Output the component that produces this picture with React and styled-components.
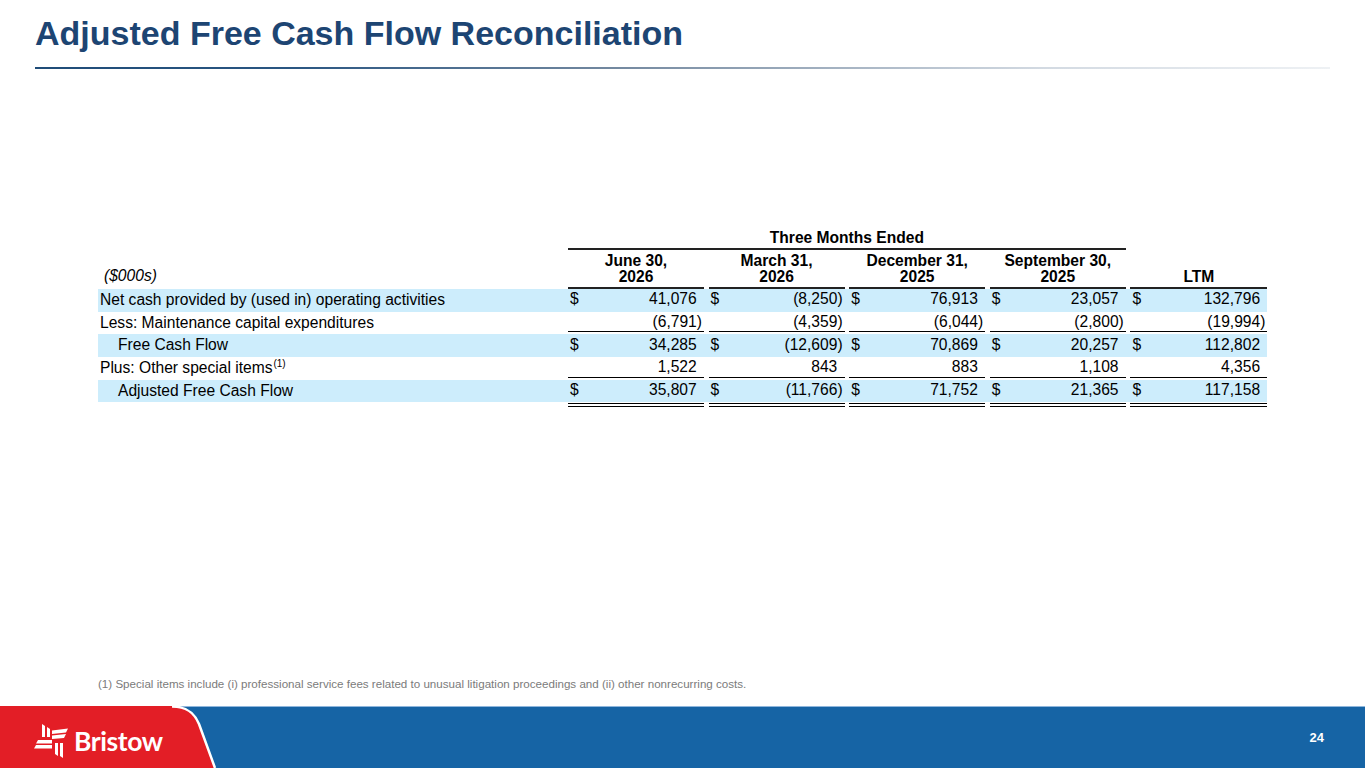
import React from 'react'
import styled, { createGlobalStyle } from 'styled-components'

const GlobalStyle = createGlobalStyle`
  html, body {
    margin: 0;
    padding: 0;
    background: #ffffff;
  }
  body {
    font-family: 'Liberation Sans', Arial, sans-serif;
  }
`

const Page = styled.div`
  width: 1365px;
  height: 768px;
  display: flex;
  flex-direction: column;
  overflow: hidden;
  background: #ffffff;
`

const Header = styled.header`
  padding: 14px 35px 0 35px;
`

const Title = styled.h1`
  margin: 0;
  font: 700 34px/39px 'Liberation Sans', Arial, sans-serif;
  color: #1d4573;
`

const TitleRule = styled.div`
  margin-top: 14px;
  height: 2px;
  background: linear-gradient(
    to right,
    #1f4c78 0%,
    #2a5682 20%,
    #7489a0 45%,
    #d3dae2 78%,
    #eef1f4 100%
  );
`

const Body = styled.main`
  flex: 1;
  display: flex;
  flex-direction: column;
  padding: 160px 0 0 98px;
`

const Table = styled.div`
  width: 1169.4px;
  font-family: 'Liberation Sans', Arial, sans-serif;
  font-size: 15.6px;
  color: #000;
`

const Row = styled.div`
  display: grid;
  grid-template-columns: 470px repeat(4, 140.6px) 137px;
  height: ${props => props.height || '22.6px'};
  background: ${props => (props.shaded ? '#cdedfc' : 'transparent')};
`

const GroupTitle = styled.div`
  grid-column: 2 / 6;
  margin-right: 4.6px;
  text-align: center;
  font-weight: 700;
  line-height: 18px;
  padding-bottom: 1px;
  border-bottom: 2px solid #222;
`

const HeadRow = styled.div`
  display: grid;
  grid-template-columns: 470px repeat(4, 140.6px) 137px;
  align-items: end;
`

const UnitsLabel = styled.div`
  font-style: italic;
  padding: 0 0 6px 6px;
  line-height: 15.6px;
`

const ColHead = styled.div`
  margin-right: ${props => (props.last ? '0' : '4.6px')};
  padding: 3px 0 3px;
  text-align: center;
  font-weight: 700;
  line-height: 15.6px;
  border-bottom: 2px solid #222;
`

const Label = styled.div`
  padding-left: ${props => (props.indent ? '20px' : '2px')};
  line-height: 22px;
  white-space: nowrap;
`

const Sup = styled.sup`
  font-size: 10px;
  line-height: 0;
  vertical-align: 6px;
  margin-left: 1px;
`

const Figure = styled.div`
  display: flex;
  align-items: center;
  justify-content: space-between;
  margin-right: ${props => (props.last ? '0' : '4.6px')};
  margin-bottom: 2px;
  padding: 1px 2px 0 2px;
  border-bottom: 1px solid ${props => (props.rule ? '#000' : 'transparent')};
  white-space: nowrap;
`

const Amount = styled.span`
  padding-right: ${props => (props.neg ? '0' : '0.34em')};
`

const DoubleRuleRow = styled.div`
  display: grid;
  grid-template-columns: 470px repeat(4, 140.6px) 137px;
`

const DoubleRule = styled.div`
  grid-column: ${props => props.col};
  margin: 1px ${props => (props.last ? '0' : '4.6px')} 0 0;
  height: 2px;
  border-top: 1px solid #000;
  border-bottom: 1px solid #000;
`

const Footnote = styled.p`
  margin: auto 0 14px 0;
  font: 400 11.6px/16px 'Liberation Sans', Arial, sans-serif;
  color: #7b7b7b;
`

const Footer = styled.footer`
  height: 61px;
  display: flex;
  align-items: center;
  background: #1664a5;
  border-top: 1px solid #8fb6dc;
`

const Tab = styled.div`
  position: relative;
  width: 230px;
  height: 100%;
  display: flex;
  align-items: center;
  padding-left: 32px;
  box-sizing: border-box;
`

const TabShape = styled.svg`
  position: absolute;
  left: 0;
  top: -1px;
  width: 230px;
  height: 62px;
`

const Logo = styled.div`
  position: relative;
  display: flex;
  align-items: center;
  gap: 2px;
  margin-top: 2px;
`

const Wordmark = styled.span`
  font: 700 26.5px/1 Lato, 'Open Sans', sans-serif;
  color: #fff;
  letter-spacing: -0.4px;
  margin-top: 6px;
`

const Spacer = styled.div`
  flex: 1;
`

const PageNumber = styled.span`
  padding-right: 41px;
  font: 700 13px/1 'Liberation Sans', Arial, sans-serif;
  color: #fff;
  margin-top: -1px;
`

const columns = [
  ['June 30,', '2026'],
  ['March 31,', '2026'],
  ['December 31,', '2025'],
  ['September 30,', '2025']
]

const rows = [
  {
    label: 'Net cash provided by (used in) operating activities',
    shaded: true,
    dollar: true,
    values: ['41,076', '(8,250)', '76,913', '23,057', '132,796']
  },
  {
    label: 'Less: Maintenance capital expenditures',
    rule: true,
    values: ['(6,791)', '(4,359)', '(6,044)', '(2,800)', '(19,994)']
  },
  {
    label: 'Free Cash Flow',
    indent: true,
    shaded: true,
    dollar: true,
    values: ['34,285', '(12,609)', '70,869', '20,257', '112,802']
  },
  {
    label: 'Plus: Other special items',
    note: '(1)',
    rule: true,
    values: ['1,522', '843', '883', '1,108', '4,356']
  },
  {
    label: 'Adjusted Free Cash Flow',
    indent: true,
    shaded: true,
    dollar: true,
    values: ['35,807', '(11,766)', '71,752', '21,365', '117,158']
  }
]

const Mark = () => (
  <svg width='40' height='42' viewBox='0 0 40 42' fill='#fff'>
    <polygon points='10,6 13,8 13,19 10,19' />
    <polygon points='15,9 18,11 18,19 15,19' />
    <polygon points='20,12.5 36,10.5 34,14.5 20,16' />
    <polygon points='20,17.5 34,16 32,20 20,21' />
    <polygon points='6,22 20,22 20,25.5 4,25.5' />
    <polygon points='4,27 20,27 20,30.5 2,30.5' />
    <polygon points='23,25 26,25 26,38 23,36' />
    <polygon points='28,25 31,25 31,40 28,38' />
  </svg>
)

export default function App () {
  return (
    <Page>
      <GlobalStyle />
      <Header>
        <Title>Adjusted Free Cash Flow Reconciliation</Title>
        <TitleRule />
      </Header>
      <Body>
        <Table>
          <Row height='auto'>
            <GroupTitle>Three Months Ended</GroupTitle>
          </Row>
          <HeadRow>
            <UnitsLabel>($000s)</UnitsLabel>
            {columns.map(([a, b]) => (
              <ColHead key={a}>
                {a}
                <br />
                {b}
              </ColHead>
            ))}
            <ColHead last>LTM</ColHead>
          </HeadRow>
          {rows.map(row => (
            <Row key={row.label} shaded={row.shaded}>
              <Label indent={row.indent}>
                {row.label}
                {row.note && <Sup>{row.note}</Sup>}
              </Label>
              {row.values.map((value, i) => (
                <Figure key={i} rule={row.rule} last={i === 4}>
                  <span>{row.dollar ? '$' : ''}</span>
                  <Amount neg={value.startsWith('(')}>{value}</Amount>
                </Figure>
              ))}
            </Row>
          ))}
          <DoubleRuleRow>
            {[2, 3, 4, 5, 6].map(col => (
              <DoubleRule key={col} col={col} last={col === 6} />
            ))}
          </DoubleRuleRow>
        </Table>
        <Footnote>
          (1) Special items include (i) professional service fees related to
          unusual litigation proceedings and (ii) other nonrecurring costs.
        </Footnote>
      </Body>
      <Footer>
        <Tab>
          <TabShape viewBox='0 0 230 62'>
            <path d='M0 0 H172 C186 0 194 6 199 18 L215 62 H0 Z' fill='#e31e26' />
            <path
              d='M172 0.5 C186 0.5 194 6 199 18 L215 62'
              fill='none'
              stroke='#fff'
              strokeWidth='2.5'
            />
          </TabShape>
          <Logo>
            <Mark />
            <Wordmark>Bristow</Wordmark>
          </Logo>
        </Tab>
        <Spacer />
        <PageNumber>24</PageNumber>
      </Footer>
    </Page>
  )
}
